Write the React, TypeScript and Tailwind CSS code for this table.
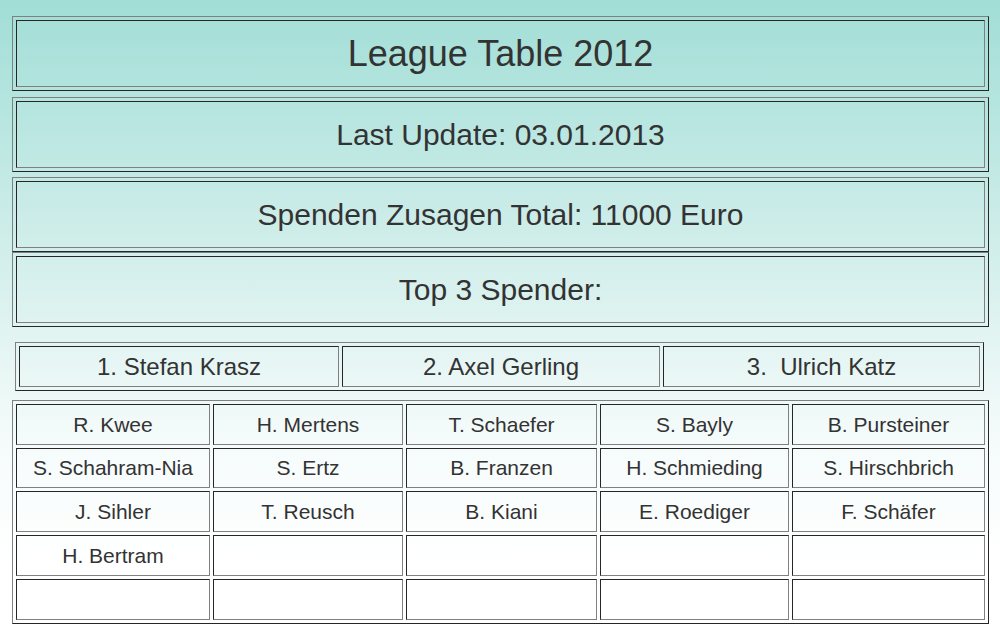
import React from 'react'

const outer = 'border border-t-[#808080] border-l-[#808080] border-b-[#262626] border-r-[#262626]'
const inner = 'border border-t-[#262626] border-l-[#262626] border-b-[#808080] border-r-[#808080]'

const top3 = ['1. Stefan Krasz', '2. Axel Gerling', '3.\u00a0 Ulrich Katz']

const names = [
  'R. Kwee', 'H. Mertens', 'T. Schaefer', 'S. Bayly', 'B. Pursteiner',
  'S. Schahram-Nia', 'S. Ertz', 'B. Franzen', 'H. Schmieding', 'S. Hirschbrich',
  'J. Sihler', 'T. Reusch', 'B. Kiani', 'E. Roediger', 'F. Schäfer',
  'H. Bertram', '', '', '', '',
  '', '', '', '', '',
]

function Header({ text, size, className }: { text: string; size: string; className?: string }) {
  return (
    <div className={`${outer} p-[3px] ${className ?? ''}`}>
      <div className={`${inner} h-[67px] flex items-center justify-center ${size}`}>{text}</div>
    </div>
  )
}

export default function App() {
  return (
    <div
      className="w-[1000px] h-[634px] overflow-hidden bg-[linear-gradient(to_bottom,#a1ded6_0px,#c8ebe7_200px,#def3f0_317px,#f5fbfb_440px,#ffffff_560px)] text-[#333] pt-4 pl-3"
      style={{ fontFamily: '"Liberation Sans", Arial, sans-serif' }}
    >
      <div className="w-[977px] flex flex-col">
        <Header text="League Table 2012" size="text-[36px]" />
        <Header text="Last Update: 03.01.2013" size="text-[30px]" className="mt-[6px]" />
        <Header text="Spenden Zusagen Total: 11000 Euro" size="text-[30px]" className="mt-[5px]" />
        <Header text="Top 3 Spender:" size="text-[30px]" />

        <div className={`${outer} ml-[3px] mt-[15px] w-[969px] p-[3px] grid grid-cols-[320px_318px_317px] gap-[3px]`}>
          {top3.map((n) => (
            <div key={n} className={`${inner} h-[41px] flex items-center justify-center text-[24px] whitespace-pre`}>
              {n}
            </div>
          ))}
        </div>

        <div
          className={`${outer} mt-[9px] p-[3px] grid grid-cols-[194px_190px_191px_189px_193px] grid-rows-[41px_40px_41px_41px_41px] gap-[3px]`}
        >
          {names.map((n, i) => (
            <div key={i} className={`${inner} flex items-center justify-center text-[21px]`}>
              {n}
            </div>
          ))}
        </div>
      </div>
    </div>
  )
}
